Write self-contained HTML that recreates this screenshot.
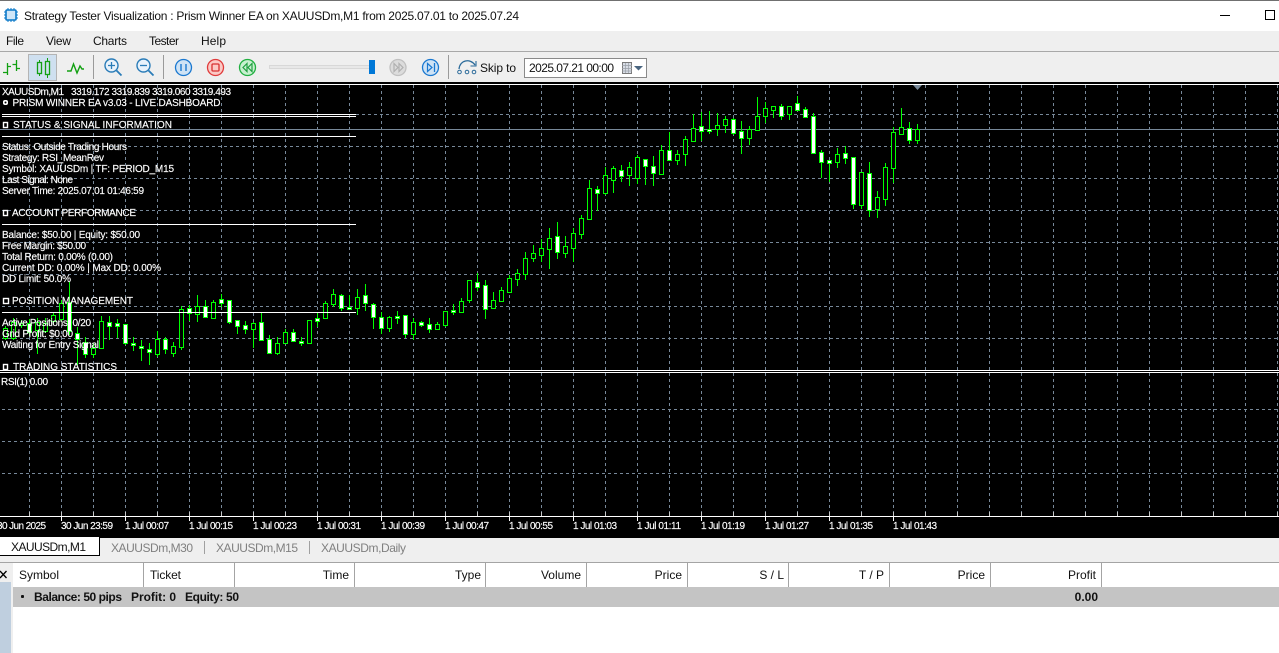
<!DOCTYPE html>
<html><head><meta charset="utf-8"><title>Strategy Tester Visualization</title>
<style>
html,body{margin:0;padding:0;background:#fff;width:1279px;height:653px;overflow:hidden}
svg{display:block;position:absolute;left:0;top:0}
text{font-family:"Liberation Sans",sans-serif}
.c text{font-size:10px;fill:#fff;stroke:#fff;stroke-width:.15}
.u text{font-size:12px;fill:#111}
.t text{font-size:12px;fill:#808080}
</style></head><body>
<svg width="1279" height="653" viewBox="0 0 1279 653" xmlns="http://www.w3.org/2000/svg">
<rect width="1279" height="653" fill="#fff"/>
<rect width="1279" height="1" fill="#707070"/>
<!-- app icon -->
<rect x="6" y="10" width="10" height="10" rx="1" fill="#cfe6f8" stroke="#0a78c8" stroke-width="1.6"/>
<path d="M8 8v14M11 8v14M14 8v14M4 12h14M4 15h14M4 18h14" stroke="#0a78c8" stroke-width="1" stroke-dasharray="2 10"/>
<g class="u">
<text x="24" y="20" textLength="495">Strategy Tester Visualization : Prism Winner EA on XAUUSDm,M1 from 2025.07.01 to 2025.07.24</text>
</g>
<path d="M1220 15.5h10" stroke="#000"/>
<rect x="1265.5" y="10.5" width="9" height="9" fill="none" stroke="#000"/>
<!-- menu + toolbar -->
<rect y="31" width="1279" height="51" fill="#efefef"/>
<rect y="51" width="1279" height="1" fill="#a8a8a8"/>
<g class="u">
<text x="6" y="45" textLength="18">File</text>
<text x="46" y="45" textLength="25">View</text>
<text x="93" y="45" textLength="34">Charts</text>
<text x="149" y="45" textLength="30">Tester</text>
<text x="201" y="45" textLength="25">Help</text>
</g>
<!-- toolbar icons -->
<path d="M7.5 63V75M3 72.5H7M8 66.5H11M16.5 60V71M12.5 64.5H16M17 68.5H20" stroke="#12a012" stroke-width="1.3" fill="none"/>
<rect x="28.5" y="54.5" width="28" height="26" fill="#cfe0f0" stroke="#b4b4b4"/>
<path d="M39.5 60V76M47.5 58V78" stroke="#12a012"/>
<rect x="37.5" y="62.5" width="4" height="11" fill="#cfe0f0" stroke="#12a012" stroke-width="1.3"/>
<rect x="45.5" y="61.5" width="4" height="13" fill="#cfe0f0" stroke="#12a012" stroke-width="1.3"/>
<path d="M67 71L71 71L73.5 64L77 73L80 66L82 69H84" fill="none" stroke="#12a012" stroke-width="1.4"/>
<path d="M93.5 55V79M163.5 55V79M448.5 55V79" stroke="#9a9a9a"/>
<circle cx="111.5" cy="65.5" r="6.5" fill="#e8f2fb" stroke="#2a7cb8" stroke-width="1.4"/>
<path d="M116.5 70.5L121.5 75.5" stroke="#2a7cb8" stroke-width="1.8"/>
<path d="M108 65.5h7M111.5 62v7" stroke="#2a7cb8" stroke-width="1.3"/>
<circle cx="143.5" cy="65.5" r="6.5" fill="#e8f2fb" stroke="#2a7cb8" stroke-width="1.4"/>
<path d="M148.5 70.5L153.5 75.5" stroke="#2a7cb8" stroke-width="1.8"/>
<path d="M140 65.5h7" stroke="#2a7cb8" stroke-width="1.3"/>
<circle cx="183.5" cy="67.5" r="8" fill="#cfe3f5" stroke="#1a78d0" stroke-width="1.3"/>
<path d="M181 64v7M186 64v7" stroke="#1a78d0" stroke-width="1.4"/>
<circle cx="215.5" cy="67.5" r="8" fill="#fbc9c5" stroke="#e03b3b" stroke-width="1.3"/>
<rect x="212" y="64" width="7" height="7" rx="1" fill="none" stroke="#d83030" stroke-width="1.3"/>
<circle cx="247.5" cy="67.5" r="8" fill="#c8f0d0" stroke="#20b040" stroke-width="1.3"/>
<path d="M247 63.5L243 67.5L247 71.5ZM252 63.5L248 67.5L252 71.5Z" fill="none" stroke="#20a040" stroke-width="1.2"/>
<rect x="269.5" y="65.5" width="102" height="3" fill="#e8e8e8" stroke="#d8d8d8"/>
<rect x="369" y="60" width="6" height="14" fill="#0078d7"/>
<circle cx="398" cy="67.5" r="8" fill="#dcdcdc" stroke="#c0c0c0" stroke-width="1.3"/>
<path d="M394 63.5L398 67.5L394 71.5ZM399 63.5L403 67.5L399 71.5Z" fill="none" stroke="#b0b0b0" stroke-width="1.2"/>
<circle cx="430.5" cy="67.5" r="8" fill="#cfe3f5" stroke="#1a78d0" stroke-width="1.3"/>
<path d="M427.5 63.5L432 67.5L427.5 71.5Z" fill="none" stroke="#1a78d0" stroke-width="1.2"/>
<path d="M434.5 63v9" stroke="#1a78d0" stroke-width="1.3"/>
<path d="M459 69C460 60 470 58 475 65" fill="none" stroke="#2a6a9a" stroke-width="1.3"/>
<path d="M470.5 66H476V61" fill="none" stroke="#2a6a9a" stroke-width="1.1"/>
<circle cx="459.5" cy="72" r="1.8" fill="none" stroke="#2a6a9a"/>
<circle cx="467" cy="72" r="1.8" fill="none" stroke="#2a6a9a"/>
<circle cx="474" cy="72" r="1.8" fill="none" stroke="#2a6a9a"/>
<g class="u"><text x="480" y="72" textLength="36">Skip to</text></g>
<rect x="524.5" y="58.5" width="122" height="19" fill="#fff" stroke="#8a8a8a"/>
<g class="u"><text x="529" y="72" textLength="85">2025.07.21 00:00</text></g>
<rect x="622.5" y="62.5" width="9" height="11" fill="#d8dde6" stroke="#7a7a7a"/>
<path d="M622 65.5h10M622 68.5h10M622 71h10M625.5 63v10M628.5 63v10" stroke="#9aa0a8" stroke-width=".7"/>
<path d="M634 66H643L638.5 70.5Z" fill="#4a6580"/>

<!-- chart -->
<rect y="82" width="1279" height="456" fill="#000"/>
<rect y="84" width="1279" height="1" fill="#fff"/>
<!-- grid -->
<path d="M29.5 85v431m32-431v431m32-431v431m32-431v431m32-431v431m32-431v431m32-431v431m32-431v431m32-431v431m32-431v431m32-431v431m32-431v431m32-431v431m32-431v431m32-431v431m32-431v431m32-431v431m32-431v431m32-431v431m32-431v431m32-431v431m32-431v431m32-431v431m32-431v431m32-431v431m32-431v431m32-431v431m32-431v431m32-431v431m32-431v431m32-431v431m32-431v431m32-431v431m32-431v431m32-431v431m32-431v431m32-431v431m32-431v431m32-431v431m32-431v431" stroke="#778899" stroke-dasharray="3 3" fill="none"/>
<path d="M2 114.5H1279M2 146.5H1279M2 178.5H1279M2 210.5H1279M2 242.5H1279M2 274.5H1279M2 306.5H1279M2 338.5H1279M2 409.5H1279M2 441.5H1279M2 473.5H1279" stroke="#778899" stroke-dasharray="3 3" fill="none"/>
<path d="M0 129.5H1279" stroke="#778899"/>
<!-- wicks -->
<path stroke="#00ff00" fill="none" d="M5.5 326V340M13.5 318V340M21.5 320V328M29.5 319V336M37.5 318V354M45.5 318V333M53.5 312V325M61.5 300V322M69.5 282V335M77.5 327V365M85.5 337V358M93.5 343V358M101.5 316V349M109.5 316V340M117.5 319V338M125.5 324V345M133.5 337V351M141.5 340V361M149.5 343V365M157.5 331V357M165.5 337V354M173.5 342V357M181.5 306V350M189.5 305V321M197.5 295V322M205.5 300V318M213.5 300V318M221.5 294V307M229.5 300V324M237.5 320V334M245.5 321V334M253.5 322V348M261.5 313V340M269.5 335V354M277.5 337V355M285.5 329V343M293.5 329V341M301.5 337V346M309.5 320V343M317.5 313V327M325.5 301V318M333.5 289V307M341.5 294V311M349.5 295V309M357.5 289V315M365.5 284V311M373.5 303V329M381.5 312V334M389.5 316V332M397.5 311V324M405.5 315V338M413.5 318V340M421.5 321V327M429.5 318V333M437.5 322V329M445.5 311V327M453.5 304V315M461.5 298V312M469.5 280V303M477.5 273V291M485.5 280V319M493.5 292V309M501.5 287V301M509.5 275V292M517.5 269V286M525.5 252V280M533.5 245V262M541.5 239V262M549.5 228V269M557.5 222V259M565.5 236V258M573.5 228V262M581.5 215V239M589.5 180V219M597.5 186V211M605.5 167V195M613.5 166V193M621.5 165V182M629.5 162V186M637.5 155V184M645.5 159V185M653.5 156V186M661.5 145V174M669.5 132V160M677.5 150V165M685.5 136V166M693.5 114V141M701.5 112V141M709.5 111V134M717.5 113V136M725.5 116V133M733.5 118V135M741.5 121V154M749.5 126V145M757.5 97V130M765.5 102V123M773.5 107V118M781.5 104V120M789.5 106V120M797.5 96V111M805.5 107V118M813.5 113V154M821.5 150V178M829.5 160V182M837.5 148V168M845.5 146V164M853.5 157V209M861.5 172V209M869.5 162V217M877.5 191V218M885.5 163V206M893.5 127V183M901.5 108V135M909.5 122V144M917.5 124V144"/>
<!-- hollow bodies -->
<path stroke="#00ff00" fill="#000" d="M3.5 328.5h4V338.5h-4zM11.5 322.5h4V338.5h-4zM19.5 323.5h4V325.5h-4zM35.5 322.5h4V330.5h-4zM43.5 323.5h4V331.5h-4zM51.5 315.5h4V321.5h-4zM59.5 303.5h4V319.5h-4zM91.5 348.5h4V354.5h-4zM99.5 321.5h4V348.5h-4zM155.5 339.5h4V354.5h-4zM171.5 346.5h4V353.5h-4zM179.5 309.5h4V347.5h-4zM195.5 306.5h4V314.5h-4zM211.5 302.5h4V318.5h-4zM251.5 323.5h4V329.5h-4zM275.5 343.5h4V353.5h-4zM283.5 332.5h4V343.5h-4zM307.5 320.5h4V343.5h-4zM323.5 303.5h4V318.5h-4zM331.5 294.5h4V304.5h-4zM355.5 297.5h4V308.5h-4zM387.5 317.5h4V328.5h-4zM411.5 322.5h4V334.5h-4zM435.5 324.5h4V329.5h-4zM443.5 311.5h4V325.5h-4zM459.5 301.5h4V312.5h-4zM467.5 280.5h4V300.5h-4zM491.5 300.5h4V308.5h-4zM499.5 290.5h4V301.5h-4zM507.5 278.5h4V292.5h-4zM515.5 273.5h4V279.5h-4zM523.5 258.5h4V274.5h-4zM531.5 253.5h4V258.5h-4zM539.5 248.5h4V255.5h-4zM547.5 238.5h4V249.5h-4zM563.5 246.5h4V253.5h-4zM571.5 233.5h4V248.5h-4zM579.5 218.5h4V234.5h-4zM587.5 188.5h4V219.5h-4zM603.5 175.5h4V193.5h-4zM611.5 168.5h4V180.5h-4zM627.5 167.5h4V175.5h-4zM635.5 157.5h4V178.5h-4zM659.5 150.5h4V174.5h-4zM675.5 154.5h4V160.5h-4zM683.5 139.5h4V154.5h-4zM691.5 128.5h4V141.5h-4zM715.5 125.5h4V129.5h-4zM723.5 119.5h4V125.5h-4zM747.5 129.5h4V138.5h-4zM755.5 116.5h4V130.5h-4zM763.5 108.5h4V116.5h-4zM771.5 106.5h4V110.5h-4zM787.5 106.5h4V114.5h-4zM835.5 154.5h4V162.5h-4zM859.5 172.5h4V205.5h-4zM875.5 197.5h4V209.5h-4zM883.5 167.5h4V199.5h-4zM891.5 132.5h4V168.5h-4zM899.5 127.5h4V134.5h-4zM915.5 129.5h4V140.5h-4z"/>
<!-- white bodies -->
<path stroke="#00ff00" fill="#fff" d="M27.5 323.5h4V332.5h-4zM67.5 302.5h4V331.5h-4zM75.5 333.5h4V339.5h-4zM83.5 342.5h4V354.5h-4zM107.5 322.5h4V326.5h-4zM115.5 323.5h4V326.5h-4zM123.5 324.5h4V343.5h-4zM131.5 343.5h4V345.5h-4zM139.5 346.5h4V348.5h-4zM147.5 349.5h4V352.5h-4zM163.5 339.5h4V349.5h-4zM187.5 308.5h4V313.5h-4zM203.5 306.5h4V317.5h-4zM219.5 299.5h4V303.5h-4zM227.5 300.5h4V322.5h-4zM235.5 320.5h4V326.5h-4zM243.5 325.5h4V329.5h-4zM259.5 322.5h4V340.5h-4zM267.5 339.5h4V353.5h-4zM291.5 332.5h4V341.5h-4zM299.5 341.5h4V343.5h-4zM315.5 318.5h4V321.5h-4zM339.5 295.5h4V308.5h-4zM347.5 307.5h4V309.5h-4zM363.5 295.5h4V303.5h-4zM371.5 304.5h4V317.5h-4zM379.5 317.5h4V328.5h-4zM395.5 316.5h4V318.5h-4zM403.5 315.5h4V334.5h-4zM419.5 322.5h4V325.5h-4zM427.5 324.5h4V329.5h-4zM451.5 310.5h4V312.5h-4zM475.5 282.5h4V287.5h-4zM483.5 285.5h4V309.5h-4zM555.5 236.5h4V252.5h-4zM595.5 189.5h4V193.5h-4zM619.5 170.5h4V176.5h-4zM643.5 159.5h4V166.5h-4zM651.5 166.5h4V173.5h-4zM667.5 150.5h4V160.5h-4zM699.5 126.5h4V131.5h-4zM707.5 129.5h4V131.5h-4zM731.5 119.5h4V133.5h-4zM739.5 131.5h4V138.5h-4zM779.5 106.5h4V116.5h-4zM795.5 103.5h4V110.5h-4zM803.5 109.5h4V117.5h-4zM811.5 116.5h4V153.5h-4zM819.5 152.5h4V162.5h-4zM827.5 160.5h4V163.5h-4zM843.5 153.5h4V158.5h-4zM851.5 157.5h4V204.5h-4zM867.5 173.5h4V210.5h-4zM907.5 128.5h4V140.5h-4z"/>
<!-- dashboard lines -->
<path d="M2 114.5H356M2 116.5H356M2 136.5H356M2 224.5H356M2 312.5H356" stroke="#fff" fill="none"/>
<path d="M0 370.5H1279M0 372.5H1279" stroke="#fff"/>
<path d="M913 85H922L917.5 90Z" fill="#778899"/>
<!-- axis -->
<path d="M0 516.5H1279" stroke="#fff"/>
<path d="M29.5 512v4m32-4v4m32-4v4m32-4v4m32-4v4m32-4v4m32-4v4m32-4v4m32-4v4m32-4v4m32-4v4m32-4v4m32-4v4m32-4v4m32-4v4m32-4v4m32-4v4m32-4v4m32-4v4m32-4v4m32-4v4m32-4v4m32-4v4m32-4v4m32-4v4m32-4v4m32-4v4m32-4v4m32-4v4m32-4v4m32-4v4m32-4v4m32-4v4m32-4v4m32-4v4m32-4v4m32-4v4m32-4v4m32-4v4m32-4v4" stroke="#c8c8c8" fill="none"/>
<path d="M61.5 517v4M125.5 517v4M189.5 517v4M253.5 517v4M317.5 517v4M381.5 517v4M445.5 517v4M509.5 517v4M573.5 517v4M637.5 517v4M701.5 517v4M765.5 517v4M829.5 517v4M893.5 517v4" stroke="#fff" fill="none"/>
<g class="c">
<text x="2" y="95" textLength="62">XAUUSDm,M1</text>
<text x="71" y="95" textLength="160">3319.172 3319.839 3319.060 3319.493</text>
<rect x="3" y="100" width="5" height="5" rx="2" fill="#fff"/><circle cx="5.5" cy="102.5" r="1" fill="#000"/>
<text x="12.500" y="106" textLength="208">PRISM WINNER EA v3.03 - LIVE DASHBOARD</text>
<rect x="3.500" y="122.500" width="4" height="5" fill="none" stroke="#fff" stroke-width="1.4"/>
<text x="13" y="128" textLength="159">STATUS &amp; SIGNAL INFORMATION</text>
<text x="2" y="150" textLength="125">Status: Outside Trading Hours</text>
<text x="2" y="161" textLength="102">Strategy: RSI_MeanRev</text>
<text x="2" y="172" textLength="172">Symbol: XAUUSDm | TF: PERIOD_M15</text>
<text x="2" y="183" textLength="71">Last Signal: None</text>
<text x="2" y="194" textLength="142">Server Time: 2025.07.01 01:46:59</text>
<rect x="3.500" y="210.500" width="4" height="5" fill="none" stroke="#fff" stroke-width="1.4"/>
<text x="12" y="216" textLength="124">ACCOUNT PERFORMANCE</text>
<text x="2" y="238" textLength="138">Balance: $50.00 | Equity: $50.00</text>
<text x="2" y="249" textLength="84">Free Margin: $50.00</text>
<text x="2" y="260" textLength="111">Total Return: 0.00% (0.00)</text>
<text x="2" y="271" textLength="159">Current DD: 0.00% | Max DD: 0.00%</text>
<text x="2" y="282" textLength="69">DD Limit: 50.0%</text>
<rect x="3.500" y="298.500" width="5" height="5" fill="none" stroke="#fff" stroke-width="1.4"/>
<text x="12" y="304" textLength="121">POSITION MANAGEMENT</text>
<text x="2" y="326" textLength="89">Active Positions: 0/20</text>
<text x="2" y="337" textLength="71">Grid Profit: $0.00</text>
<text x="2" y="348" textLength="97">Waiting for Entry Signal</text>
<rect x="3.500" y="364.500" width="4" height="5" fill="none" stroke="#fff" stroke-width="1.4"/>
<text x="13" y="370" textLength="104">TRADING STATISTICS</text>
<text x="1" y="385" textLength="47">RSI(1) 0.00</text>
<text x="-3" y="529" textLength="49">30 Jun 2025</text>
<text x="61" y="529" textLength="52">30 Jun 23:59</text>
<text x="125" y="529" textLength="44">1 Jul 00:07</text>
<text x="189" y="529" textLength="44">1 Jul 00:15</text>
<text x="253" y="529" textLength="44">1 Jul 00:23</text>
<text x="317" y="529" textLength="44">1 Jul 00:31</text>
<text x="381" y="529" textLength="44">1 Jul 00:39</text>
<text x="445" y="529" textLength="44">1 Jul 00:47</text>
<text x="509" y="529" textLength="44">1 Jul 00:55</text>
<text x="573" y="529" textLength="44">1 Jul 01:03</text>
<text x="637" y="529" textLength="44">1 Jul 01:11</text>
<text x="701" y="529" textLength="44">1 Jul 01:19</text>
<text x="765" y="529" textLength="44">1 Jul 01:27</text>
<text x="829" y="529" textLength="44">1 Jul 01:35</text>
<text x="893" y="529" textLength="44">1 Jul 01:43</text>
</g>
<!-- tabs -->
<rect y="538" width="1279" height="24" fill="#efefef"/>
<rect y="537" width="99" height="18" fill="#fff"/>
<path d="M0 555.500H99.500V537" fill="none" stroke="#000"/>
<g class="u"><text x="11" y="551" textLength="75">XAUUSDm,M1</text></g>
<g class="t">
<text x="111" y="552" textLength="82">XAUUSDm,M30</text>
<text x="216" y="552" textLength="82">XAUUSDm,M15</text>
<text x="321" y="552" textLength="85">XAUUSDm,Daily</text>
</g>
<path d="M204.500 541v13M309.500 541v13" stroke="#a0a0a0"/>
<!-- table -->
<rect y="562" width="1279" height="1" fill="#a4a4a4"/>
<rect y="563" width="13" height="90" fill="#efefef"/>
<rect y="582" width="11" height="71" fill="#bfcfdf"/>
<path d="M0 571L6.500 578M6.500 571L0 578" stroke="#000" stroke-width="1.300"/>
<path d="M143.500 563V587M234.500 563V587M354.500 563V587M485.500 563V587M586.500 563V587M687.500 563V587M788.500 563V587M889.500 563V587M990.500 563V587M1101.500 563V587" stroke="#a4a4a4"/>
<g class="u">
<text x="19" y="579" textLength="40">Symbol</text>
<text x="150" y="579" textLength="31">Ticket</text>
<text x="349" y="579" text-anchor="end">Time</text>
<text x="481" y="579" text-anchor="end">Type</text>
<text x="581" y="579" text-anchor="end">Volume</text>
<text x="682" y="579" text-anchor="end">Price</text>
<text x="784" y="579" text-anchor="end">S / L</text>
<text x="884" y="579" text-anchor="end">T / P</text>
<text x="985" y="579" text-anchor="end">Price</text>
<text x="1096" y="579" text-anchor="end">Profit</text>
</g>
<rect x="13" y="587" width="1266" height="20" fill="#c4c4c4"/>
<rect x="21" y="595" width="3" height="3" rx="1" fill="#111"/>
<g class="u" style="font-weight:bold">
<text x="34" y="601" textLength="88">Balance: 50 pips</text>
<text x="131" y="601" textLength="45">Profit: 0</text>
<text x="185" y="601" textLength="54">Equity: 50</text>
<text x="1098" y="601" text-anchor="end">0.00</text>
</g>
</svg>
</body></html>
